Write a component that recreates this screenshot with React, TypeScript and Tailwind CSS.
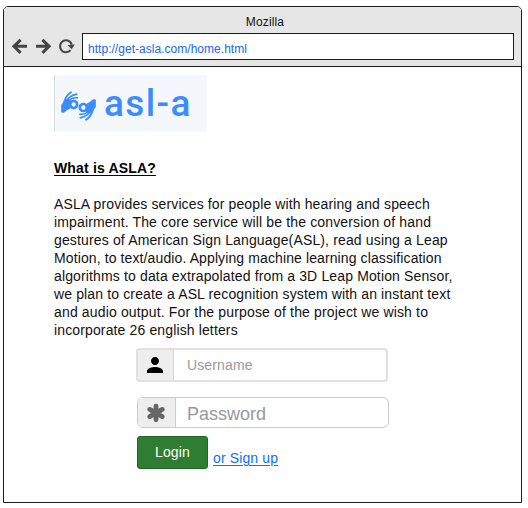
import { MdPerson } from 'react-icons/md';

const description = [
  { text: 'ASLA provides services for people with hearing and speech', spacing: 'tracking-[0.123px]' },
  { text: 'impairment. The core service will be the conversion of hand', spacing: 'tracking-[0.144px]' },
  { text: 'gestures of American Sign Language(ASL), read using a Leap', spacing: 'tracking-[0.147px]' },
  { text: 'Motion, to text/audio. Applying machine learning classification', spacing: 'tracking-[0.111px]' },
  { text: 'algorithms to data extrapolated from a 3D Leap Motion Sensor,', spacing: 'tracking-[0.141px]' },
  { text: 'we plan to create a ASL recognition system with an instant text', spacing: 'tracking-[0.137px]' },
  { text: 'and audio output. For the purpose of the project we wish to', spacing: 'tracking-[0.154px]' },
  { text: 'incorporate 26 english letters', spacing: 'tracking-[0.133px]' },
];

function BrowserBar() {
  return (
    <header className="h-[60px] border-b border-[#1c1c1c] bg-[#e6e6e6]">
      <div className="h-[26px] pt-[6px] pl-[5px] text-center text-[12px] leading-[18px] tracking-[0.15px] text-[#111]">Mozilla</div>
      <div className="flex">
        <svg className="h-7 w-[78px] shrink-0" viewBox="0 0 78 28" fill="none" stroke="#444" strokeWidth="3">
          <path d="M23 13.3H10.5M16.6 6.8L9.9 13.3L16.6 19.8" />
          <path d="M32 13.3H44.5M38.4 6.8L45.1 13.3L38.4 19.8" />
          <path d="M66.6 17.2A6 6 0 1 1 67.8 11.6" strokeWidth="2" />
          <path d="M63.6 12L70.8 11.6L67.6 16.2Z" fill="#444" stroke="none" />
        </svg>
        <div className="h-[27px] w-[432px] border border-[#1c1c1c] bg-white pl-[5px] text-[12px] leading-[30px] tracking-[0.03px] text-[#1967e8]">
          http://get-asla.com/home.html
        </div>
      </div>
    </header>
  );
}

function Hand() {
  return (
    <g fill="none" stroke="currentColor" strokeLinecap="round" strokeLinejoin="round">
      <path d="M34 90L45 76Q50 70 58 76L57 98Q46 103 39 110L34 110Z" fill="currentColor" strokeWidth="5" />
      <circle cx="69" cy="88" r="10.5" strokeWidth="8" />
      <path d="M41 79Q46 61 61 51" strokeWidth="5.5" />
      <path d="M48 77Q56 62 78 57" strokeWidth="5" />
      <path d="M55 76Q64 66 80 68" strokeWidth="4.5" />
    </g>
  );
}

function Logo() {
  return (
    <div className="flex h-14 w-[153px] items-center border-l border-[#d5dade] bg-[#f4f8fc] pl-[6px] text-[#3b8cff]">
      <svg className="mt-[5px] h-[30px] w-[35px]" viewBox="32 47.5 103 90">
        <Hand />
        <g transform="rotate(180 83.5 92.5)"><Hand /></g>
      </svg>
      <span className="ml-[8px] pt-px font-['Roboto',sans-serif] text-[37px] leading-none font-medium tracking-[1.4px]">asl-a</span>
    </div>
  );
}

function Asterisk() {
  return (
    <svg className="mr-[2px] size-5" viewBox="-10 -10 20 20" stroke="#666" strokeWidth="4.8" strokeLinecap="round">
      <path d="M0 -6.8V6.8M-6.3 -3.6L6.3 3.6M-6.3 3.6L6.3 -3.6" />
    </svg>
  );
}

export default function App() {
  return (
    <div className="h-[508px] w-[528px] bg-white pt-[6px] pl-[3px] font-['Liberation_Sans',Arial,sans-serif] text-black">
      <div className="h-[497px] w-[519px] overflow-hidden rounded-t-[5px] border border-[#1c1c1c] bg-white">
        <BrowserBar />
        <main className="pt-2 pl-[50px]">
          <Logo />
          <h1 className="mt-[28px] text-[14px] leading-[18px] font-bold tracking-[0.16px] underline underline-offset-2">What is ASLA?</h1>
          <p className="mt-[18px] text-[14px] leading-[18px] whitespace-nowrap text-[#111]">
            {description.map(({ text, spacing }) => (
              <span key={text} className={`block ${spacing}`}>{text}</span>
            ))}
          </p>
          <form className="pl-[82px]">
            <div className="mt-[9px] flex h-[34px] w-[252px] overflow-hidden rounded-[4px] border-2 border-[#e0e0e0]">
              <div className="flex w-[36px] items-center justify-center border-r border-[#d6d6d6] bg-[#eee]">
                <MdPerson className="mr-px size-6 text-black" />
              </div>
              <span className="pl-[13px] text-[14px] leading-[30px] tracking-[0.13px] text-[#999]">Username</span>
            </div>
            <div className="mt-[15px] ml-px flex h-[31px] w-[252px] overflow-hidden rounded-[6px] border border-[#ccc]">
              <div className="flex w-[38px] items-center justify-center border-r border-[#ccc] bg-[#eee]">
                <Asterisk />
              </div>
              <span className="pl-[11px] text-[18px] leading-[32px] text-[#999]">Password</span>
            </div>
            <div className="mt-2 ml-px flex">
              <button type="button" className="h-[33px] w-[71px] rounded-[3px] border border-[#256329] bg-[#2e7d32] text-[14px] tracking-[0.15px] text-white">Login</button>
              <a className="ml-[5px] pt-[13px] text-[14px] leading-[18px] tracking-[0.13px] text-[#1070ee] underline underline-offset-2">or Sign up</a>
            </div>
          </form>
        </main>
      </div>
    </div>
  );
}
